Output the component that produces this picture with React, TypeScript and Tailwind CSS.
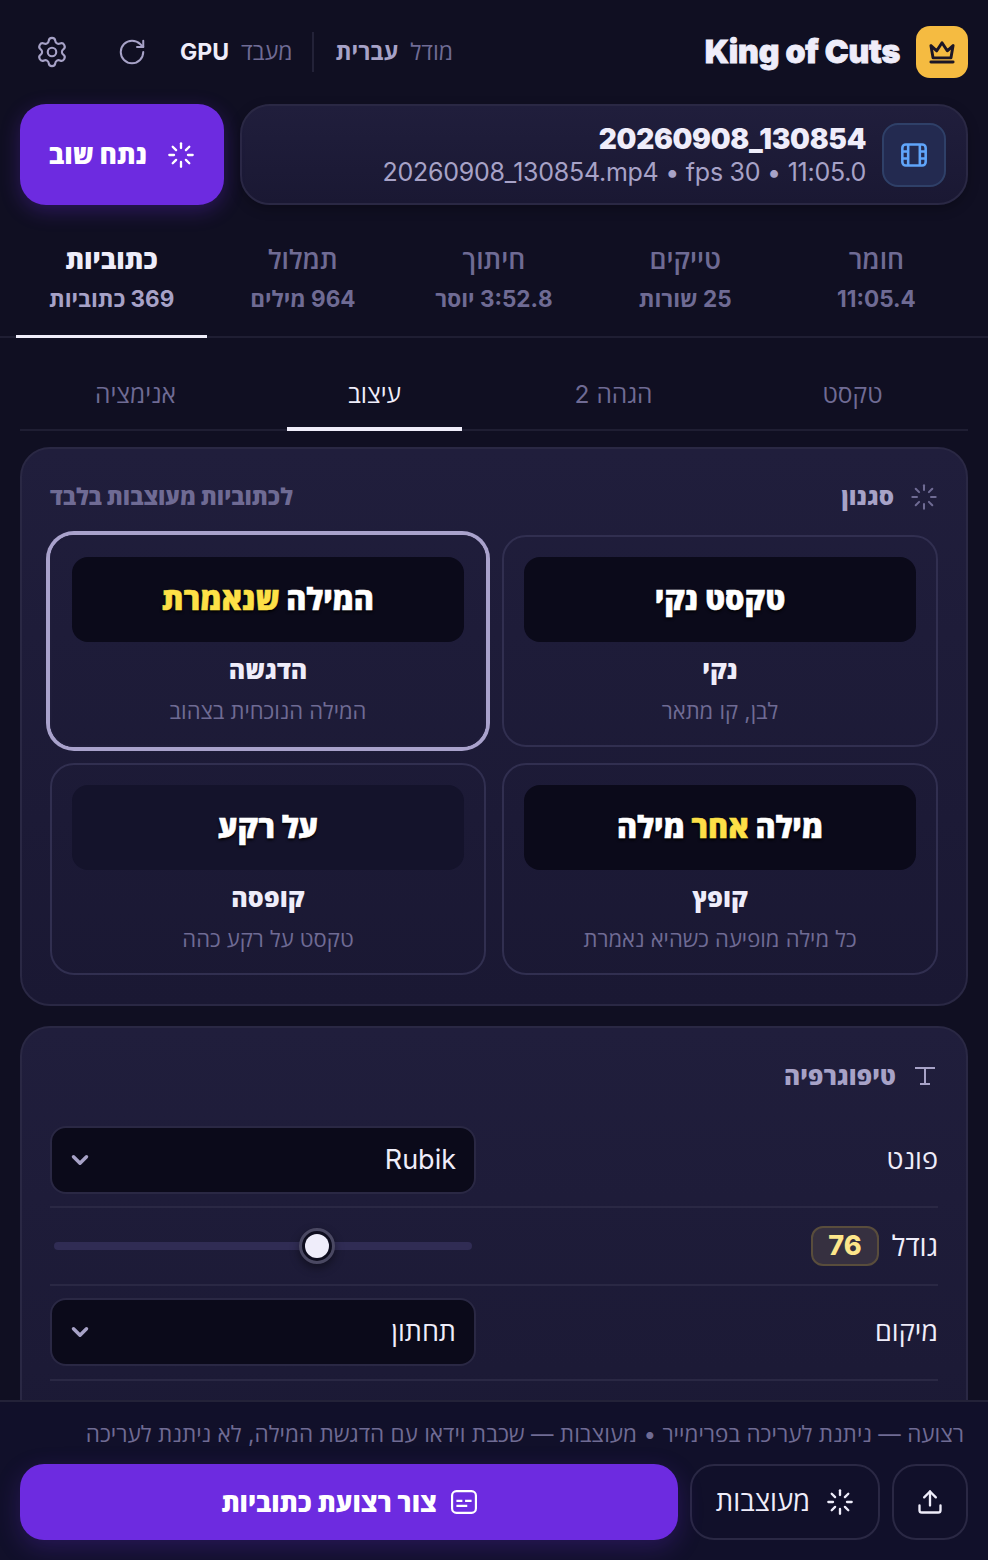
import { ChevronDown, Loader, RotateCw, Settings, Upload } from 'lucide-react'

const statTabs = [
  { title: 'חומר', sub: '11:05.4' },
  { title: 'טייקים', sub: '25 שורות' },
  { title: 'חיתוך', sub: '3:52.8 יוסר' },
  { title: 'תמלול', sub: '964 מילים' },
  { title: 'כתוביות', sub: '369 כתוביות', active: true },
]

const subTabs = [
  { label: 'טקסט' },
  { label: 'הגהה 2' },
  { label: 'עיצוב', active: true },
  { label: 'אנימציה' },
]

function CrownIcon() {
  return (
    <svg width="28" height="28" viewBox="0 0 24 24" fill="none" stroke="currentColor" strokeWidth="2.5" strokeLinejoin="round" strokeLinecap="round">
      <path d="M2.5 6.5l5 4.5L12 4l4.5 7 5-4.5-1.8 10.5H4.3z" />
      <path d="M2.5 20.5h19" />
    </svg>
  )
}

function FilmIcon() {
  return (
    <svg width="28" height="28" viewBox="0 0 24 24" fill="none" stroke="currentColor" strokeWidth="2.2" strokeLinejoin="round">
      <rect x="2" y="3" width="20" height="18" rx="3" />
      <path d="M7 3v18M17 3v18M2 9h5M2 15h5M17 9h5M17 15h5" />
    </svg>
  )
}

function TypeIcon() {
  return (
    <svg width="24" height="24" viewBox="0 0 24 24" fill="none" stroke="currentColor" strokeWidth="2">
      <path d="M1 4h20M11 4v16M6 20h10" />
    </svg>
  )
}

function CaptionIcon() {
  return (
    <svg width="26" height="26" viewBox="0 0 24 24" fill="none" stroke="currentColor" strokeWidth="2">
      <rect x="1" y="2" width="22" height="20" rx="4" />
      <path d="M5 11h5.5M13 11h6M5 15.5h10" />
    </svg>
  )
}

function Header() {
  return (
    <header className="flex h-[52px] items-center justify-between pr-5 pl-[30px]">
      <div className="flex items-center gap-4">
        <div className="flex h-[52px] w-[52px] items-center justify-center rounded-[14px] bg-[#f5bb41] text-[#1c1626]">
          <CrownIcon />
        </div>
        <span className="text-[32px] leading-none font-black tracking-[-0.2px] text-[#efedfa] [-webkit-text-stroke:0.8px_#efedfa]">
          King of Cuts
        </span>
      </div>
      <div className="flex items-center">
        <div className="flex items-center gap-3 pl-[21px] text-[23px]">
          <span className="text-[#6f6b94]">מודל</span>
          <span className="font-bold text-[#a7a2c7]">עברית</span>
        </div>
        <div className="h-10 w-0.5 bg-[#232238]" />
        <div className="flex items-center gap-3 pr-5 text-[23px]">
          <span className="text-[#6f6b94]">מעבד</span>
          <span className="font-bold text-[#efedfa]">GPU</span>
        </div>
        <button className="mr-[26px] flex h-11 w-11 items-center justify-center text-[#a7a2c7]">
          <RotateCw size={30} strokeWidth={1.6} />
        </button>
        <button className="mr-9 flex h-11 w-11 items-center justify-center text-[#a7a2c7]">
          <Settings size={34} strokeWidth={1.5} />
        </button>
      </div>
    </header>
  )
}

function FileRow() {
  return (
    <div className="mt-[26px] flex gap-4 px-5">
      <div className="flex h-[101px] flex-1 items-center gap-4 rounded-[30px] border-2 border-[#2a2844] bg-gradient-to-b from-[#201e3c] to-[#1a1833] pr-5 shadow-[0_4px_12px_rgba(0,0,0,0.25)]">
        <div className="flex h-16 w-16 items-center justify-center rounded-2xl border-2 border-[#2f4068] bg-[#232a50] text-[#60a5fa]">
          <FilmIcon />
        </div>
        <div className="flex flex-col text-right">
          <span dir="ltr" className="text-[28px] leading-[34px] font-black tracking-[-0.33px] text-[#efedfa]">
            20260908_130854
          </span>
          <span dir="ltr" className="text-[25px] leading-[32px] tracking-[-0.26px] text-[#a7a2c7]">
            20260908_130854.mp4 • fps 30 • 11:05.0
          </span>
        </div>
      </div>
      <button className="flex h-[101px] w-[204px] items-center justify-center gap-5 rounded-[26px] bg-[#6d2be0] text-[26.5px] font-extrabold text-white shadow-[0_6px_20px_rgba(109,43,224,0.3)]">
        <Loader size={28} strokeWidth={2} />
        נתח שוב
      </button>
    </div>
  )
}

function StatTabs() {
  return (
    <nav className="flex border-b-2 border-[#1f1e33] px-4">
      {statTabs.map((t) => (
        <div
          key={t.title}
          className={`-mb-0.5 flex h-[133px] flex-1 flex-col items-center border-b-[3px] pt-9 ${
            t.active ? 'border-[#efedfa]' : 'border-transparent'
          }`}
        >
          <span className={`text-[26.5px] leading-9 ${t.active ? 'font-extrabold text-[#efedfa]' : 'font-semibold text-[#6f6b94]'}`}>
            {t.title}
          </span>
          <span className={`mt-1 text-[22.5px] leading-9 font-bold ${t.active ? 'text-[#a7a2c7]' : 'text-[#6f6b94]'}`}>
            {t.sub}
          </span>
        </div>
      ))}
    </nav>
  )
}

function SubTabs() {
  return (
    <nav className="mx-5 mt-[18px] flex gap-16 border-b-2 border-[#1f1e33] px-7">
      {subTabs.map((t) => (
        <div
          key={t.label}
          className={`-mb-0.5 flex h-[75px] flex-1 items-center justify-center border-b-4 pt-[6px] text-[24.5px] ${
            t.active ? 'border-[#efedfa] font-medium text-[#efedfa]' : 'border-transparent text-[#6f6b94]'
          }`}
        >
          {t.label}
        </div>
      ))}
    </nav>
  )
}

function StyleCard({
  preview,
  title,
  desc,
  selected,
  dark = true,
}: {
  preview: React.ReactNode
  title: string
  desc: string
  selected?: boolean
  dark?: boolean
}) {
  return (
    <div
      className={`flex h-[212px] flex-col items-center rounded-3xl border-2 px-5 pt-5 ${
        selected ? 'border-[#1f1d3a] ring-4 ring-[#a9a2cc]' : 'border-[#312f50]'
      }`}
    >
      <div
        className={`flex h-[85px] w-full items-center justify-center rounded-2xl pb-0.5 text-[30.5px] font-extrabold text-white [-webkit-text-stroke:0.5px_currentColor] [text-shadow:0_2px_3px_#000] ${
          dark ? 'bg-[#0b0a1a]' : 'bg-[#14132b]'
        }`}
      >
        {preview}
      </div>
      <span className="mt-[10px] text-[25px] leading-9 font-extrabold text-[#efedfa]">{title}</span>
      <span className="mt-[7px] text-[22px] leading-8 text-[#6f6b94]">{desc}</span>
    </div>
  )
}

function StylePanel() {
  return (
    <section className="mx-5 mt-4 h-[559px] rounded-[30px] border-2 border-[#2a2844] bg-gradient-to-b from-[#201e3c] to-[#1a1833] px-7 pt-[30px]">
      <div className="flex h-[36px] items-center justify-between">
        <div className="flex items-center gap-4 text-[#a7a2c7]">
          <Loader size={28} strokeWidth={1.75} className="text-[#6f6b94]" />
          <span className="text-[24px] font-extrabold">סגנון</span>
        </div>
        <span className="text-[22.8px] font-extrabold text-[#6f6b94]">לכתוביות מעוצבות בלבד</span>
      </div>
      <div className="mt-[20px] grid grid-cols-2 gap-4">
        <StyleCard preview="טקסט נקי" title="נקי" desc="לבן, קו מתאר" />
        <StyleCard
          selected
          preview={
            <span>
              המילה <span className="text-[#fde047]">שנאמרת</span>
            </span>
          }
          title="הדגשה"
          desc="המילה הנוכחית בצהוב"
        />
        <StyleCard
          preview={
            <span>
              מילה <span className="text-[#fde047]">אחר</span> מילה
            </span>
          }
          title="קופץ"
          desc="כל מילה מופיעה כשהיא נאמרת"
        />
        <StyleCard preview="על רקע" title="קופסה" desc="טקסט על רקע כהה" dark={false} />
      </div>
    </section>
  )
}

function SelectBox({ value }: { value: string }) {
  return (
    <div className="flex h-[68px] w-[426px] items-center justify-between rounded-2xl border-2 border-[#2a2844] bg-[#0b0a1a] pr-[18px] pl-[15px] text-[27px] text-[#efedfa]">
      <span>{value}</span>
      <ChevronDown size={26} strokeWidth={3.2} className="text-[#a7a2c7]" />
    </div>
  )
}

function TypographyPanel() {
  return (
    <section className="mx-5 mt-5 rounded-[30px] border-2 border-[#2a2844] bg-gradient-to-b from-[#201e3c] to-[#1a1833] px-7 pt-[30px] pb-40">
      <div className="flex h-9 items-center gap-[18px] text-[#a7a2c7]">
        <TypeIcon />
        <span className="text-[24.5px] font-extrabold">טיפוגרפיה</span>
      </div>
      <div className="mt-[32px] flex h-[82px] items-start justify-between border-b-2 border-[#2a2844] text-[27px] text-[#efedfa]">
        <span className="mt-[14px]">פונט</span>
        <SelectBox value="Rubik" />
      </div>
      <div className="flex h-[78px] items-center justify-between border-b-2 border-[#2a2844] text-[27px] text-[#efedfa]">
        <div className="flex items-center gap-[13px]">
          <span className="text-[28px]">גודל</span>
          <span className="flex h-10 w-[68px] items-center justify-center rounded-xl border-2 border-[#594d3c] bg-[#363040] text-[27px] font-extrabold text-[#fde68a]">
            76
          </span>
        </div>
        <div className="relative ml-[4px] h-2 w-[418px] rounded-full bg-[#302c54]">
          <div className="absolute top-1/2 left-[245px] h-9 w-9 -translate-y-1/2 rounded-full border-[3px] border-[#4a4862] bg-[#0e0d1e] p-[3px] shadow-[0_4px_10px_rgba(0,0,0,0.4)]">
            <div className="h-full w-full rounded-full bg-[#efedfa]" />
          </div>
        </div>
      </div>
      <div className="flex h-[95px] items-start justify-between border-b-2 border-[#2a2844] pt-[12px] text-[27px] text-[#efedfa]">
        <span className="mt-[14px]">מיקום</span>
        <SelectBox value="תחתון" />
      </div>
    </section>
  )
}

function Footer() {
  return (
    <footer className="flex h-[160px] shrink-0 flex-col border-t-2 border-[#232238] bg-[#11102a] px-5">
      <p className="mt-[16px] pr-1 text-[22.5px] leading-8 whitespace-nowrap text-[#6f6b94]">
        רצועה — ניתנת לעריכה בפרימייר • מעוצבות — שכבת וידאו עם הדגשת המילה, לא ניתנת לעריכה
      </p>
      <div className="mt-[14px] flex h-[76px] gap-3">
        <button className="flex w-[76px] items-center justify-center rounded-3xl border-2 border-[#2a2844] text-[#efedfa]">
          <Upload size={28} strokeWidth={2} />
        </button>
        <button className="flex w-[190px] items-center justify-center gap-4 rounded-3xl border-2 border-[#2a2844] text-[27.5px] font-medium text-[#efedfa]">
          <Loader size={28} strokeWidth={2} />
          מעוצבות
        </button>
        <button className="flex flex-1 items-center justify-center gap-[14px] rounded-3xl bg-[#6d2be0] text-[26px] font-extrabold text-white shadow-[0_8px_24px_rgba(109,43,224,0.25)]">
          <CaptionIcon />
          צור רצועת כתוביות
        </button>
      </div>
    </footer>
  )
}

export default function App() {
  return (
    <div
      dir="rtl"
      className="flex h-[1560px] w-[988px] flex-col overflow-hidden bg-[#100f22] font-[Inter,'Open_Sans','Liberation_Sans',sans-serif]"
    >
      <main className="min-h-0 flex-1 overflow-hidden pt-[26px]">
        <Header />
        <FileRow />
        <StatTabs />
        <SubTabs />
        <StylePanel />
        <TypographyPanel />
      </main>
      <Footer />
    </div>
  )
}
